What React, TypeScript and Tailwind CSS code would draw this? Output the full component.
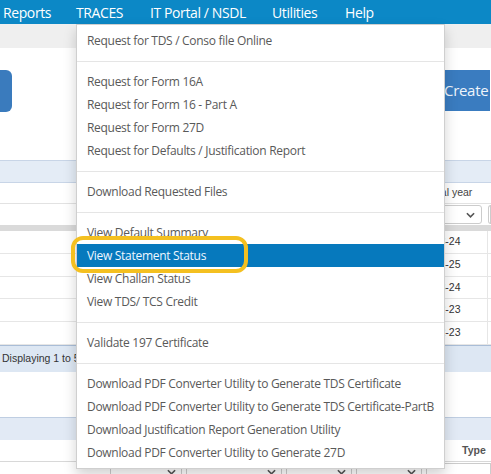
import React from "react";

type MenuEntry = { label: string; active?: boolean } | "sep";

const menu: MenuEntry[] = [
  { label: "Request for TDS / Conso file Online" },
  "sep",
  { label: "Request for Form 16A" },
  { label: "Request for Form 16 - Part A" },
  { label: "Request for Form 27D" },
  { label: "Request for Defaults / Justification Report" },
  "sep",
  { label: "Download Requested Files" },
  "sep",
  { label: "View Default Summary" },
  { label: "View Statement Status", active: true },
  { label: "View Challan Status" },
  { label: "View TDS/ TCS Credit" },
  "sep",
  { label: "Validate 197 Certificate" },
  "sep",
  { label: "Download PDF Converter Utility to Generate TDS Certificate" },
  { label: "Download PDF Converter Utility to Generate TDS Certificate-PartB" },
  { label: "Download Justification Report Generation Utility" },
  { label: "Download PDF Converter Utility to Generate 27D" },
];

const years = ["2023-24", "2024-25", "2023-24", "2022-23", "2022-23"];

function Chevron({ className = "" }: { className?: string }) {
  return (
    <svg viewBox="0 0 10 6" className={className} fill="none">
      <path d="M1 1l4 4 4-4" stroke="#555" strokeWidth="1.8" />
    </svg>
  );
}

function NavBar() {
  return (
    <div className="h-[24px] bg-[#0c88c6] flex items-center pl-[3px] text-white text-[14px] tracking-[-0.4px] font-['Open_Sans',sans-serif]">
      <div className="w-[73px]">Reports</div>
      <div className="w-[74px]">TRACES</div>
      <div className="w-[122px]">IT Portal / NSDL</div>
      <div className="w-[73px]">Utilities</div>
      <div>Help</div>
    </div>
  );
}

function DropdownMenu() {
  return (
    <div className="absolute left-[76px] top-[24px] w-[369px] bg-white border border-[#cfcfcf] shadow-[0_6px_12px_rgba(0,0,0,0.18)] pt-[4px] pb-[4px] font-['Open_Sans',sans-serif] text-[12px] tracking-[-0.3px]">
      {menu.map((m, i) =>
        m === "sep" ? (
          <div key={i} className="mt-[9px] mb-[8px] h-px bg-[#e5e5e5]" />
        ) : (
          <div
            key={i}
            className={
              m.active
                ? "h-[23px] flex items-center pl-[10px] bg-[#0679bd] text-[#eef7ff]"
                : "h-[23px] flex items-center pl-[10px] text-[#595959]"
            }
          >
            {m.label}
          </div>
        )
      )}
    </div>
  );
}

function SelectBox({ w, ml, last }: { w?: string; ml: string; last?: boolean }) {
  return (
    <div className={`${ml} ${w ?? "flex-1"} h-[14px] border border-[#ccc] flex justify-end pr-[5px] pt-[5px]`}>
      {!last && <Chevron className="w-[9px] h-[6px]" />}
    </div>
  );
}

function Page() {
  return (
    <div className="font-['Liberation_Sans',Arial,sans-serif] text-[10.5px] text-[#333]">
      <div className="h-[24px] bg-[#efefef]" />
      <div className="h-[112px] pt-[22px] flex justify-between">
        <div className="w-[12px] h-[42px] rounded-r-[6px] bg-[#3a7bbd]" />
        <div className="w-[58px] h-[41px] rounded-l-[5px] bg-[#3a7cc0] pl-[11px] flex items-center text-[#eef4fb] text-[15px] tracking-[-0.3px] font-['Open_Sans',sans-serif] whitespace-nowrap border-r border-white">
          Create
        </div>
      </div>
      <div className="h-[23px] bg-[#e4ecf6] border-y border-[#c8d5e7]" />
      <div className="h-[21px] flex items-center pl-[407px] text-[#444] border-b border-[#e2e2e2]">
        Financial year
      </div>
      <div className="h-[21px] flex items-center">
        <div className="ml-[400px] w-[82px] h-[19px] border border-[#ccc] rounded-[3px] flex items-center justify-end pr-[6px]">
          <Chevron className="w-[9px] h-[6px]" />
        </div>
        <div className="ml-[6px] flex-1 h-[19px] border border-[#ccc] rounded-l-[3px]" />
      </div>
      <div className="h-[6px] bg-[#dadada]" />
      {years.map((y, i) => (
        <div key={i} className="h-[22.8px] flex border-b border-[#e6e6e6]">
          <div className="w-[488px] flex items-center pl-[422px] border-r border-[#e6e6e6]">{y}</div>
        </div>
      ))}
      <div className="h-[27px] bg-[#dde7f3] border-t border-[#a9bdd7] flex items-center pl-[2px] text-[#333]">
        Displaying 1 to 5 of 5
      </div>
      <div className="h-[45px]" />
      <div className="h-[23px] bg-[#e2eaf5] border-t border-[#bfcee2]" />
      <div className="h-[22px] flex items-center pl-[462px] font-bold text-[#555] border-b border-[#d8d8d8]">
        Type
      </div>
      <div className="h-[14px] flex items-start pt-px">
        <SelectBox ml="ml-[110px]" w="w-[72px]" />
        <SelectBox ml="ml-[4px]" w="w-[96px]" />
        <SelectBox ml="ml-[4px]" w="w-[66px]" />
        <SelectBox ml="ml-[4px]" w="w-[66px]" />
        <SelectBox ml="ml-[4px]" last />
      </div>
    </div>
  );
}

export default function App() {
  return (
    <div className="relative w-[491px] h-[474px] overflow-hidden bg-white">
      <NavBar />
      <Page />
      <DropdownMenu />
      {/* yellow annotation ring */}
      <div className="absolute left-[71px] top-[236px] w-[177px] h-[37px] border-[4px] border-[#f4c020] rounded-[12px]" />
    </div>
  );
}
